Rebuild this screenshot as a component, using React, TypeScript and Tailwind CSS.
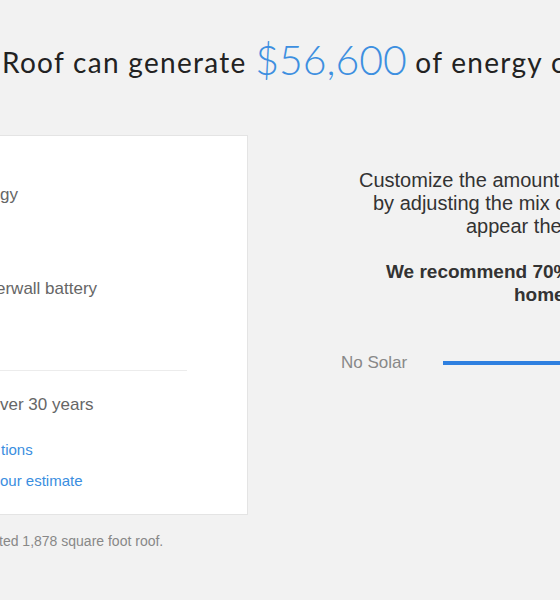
export default function App() {
  return (
    <div className="w-[560px] h-[600px] overflow-hidden bg-[#f2f2f2] font-['Liberation_Sans',Arial,sans-serif]">
      {/* headline, cut at both sides of the viewport */}
      <h1 className="h-[100px] pt-[36px] pl-[2px] whitespace-nowrap font-['Lato',sans-serif] text-[28px] leading-[48px] text-[#222] tracking-[1.3px]">
        Roof can generate{" "}
        <span className="text-[41px] font-light text-[#3d8fe0] tracking-normal align-[-2px]">$56,600</span>{" "}
        of energy over 30 years
      </h1>

      <div className="flex pt-[35px]">
        {/* savings card */}
        <div className="w-[248px] shrink-0">
          <div className="h-[380px] bg-white border border-l-0 border-[#e4e4e4] pr-[60px] text-[17px] text-[#666] whitespace-nowrap">
            <div className="pt-[47px] leading-[24px]">gy</div>
            <div className="pt-[70px] leading-[24px] -ml-[4px]">erwall battery</div>
            <div className="mt-[69px] border-t border-[#ececec]" />
            <div className="pt-[22px] leading-[24px]">ver 30 years</div>
            <div className="pt-[23px] leading-[20px] text-[15px] text-[#3a8ee0] pl-[1px]">tions</div>
            <div className="pt-[11px] leading-[20px] text-[15px] text-[#3a8ee0]">our estimate</div>
          </div>
          <p className="pt-[17px] text-[14px] leading-[18px] text-[#888] whitespace-nowrap -ml-[1px]">ted 1,878 square foot roof.</p>
        </div>

        {/* customize text and slider */}
        <div className="flex-1 whitespace-nowrap text-[20px] text-[#333]">
          <div className="pt-[34px] leading-[23px]">
            <div className="pl-[111px]">Customize the amount of energy</div>
            <div className="pl-[125px]">by adjusting the mix of solar</div>
            <div className="pl-[218px]">appear the same</div>
          </div>
          <div className="pt-[22px] leading-[23px] font-bold text-[19px]">
            <div className="pl-[138px]">We recommend 70% solar</div>
            <div className="pl-[266px]">home's energy</div>
          </div>
          <div className="flex items-center pt-[45px]">
            <span className="pl-[93px] text-[17px] text-[#888] leading-[24px]">No Solar</span>
            <div className="ml-[36px] h-[4px] flex-1 bg-[#2f80e0]" />
          </div>
        </div>
      </div>
    </div>
  )
}
